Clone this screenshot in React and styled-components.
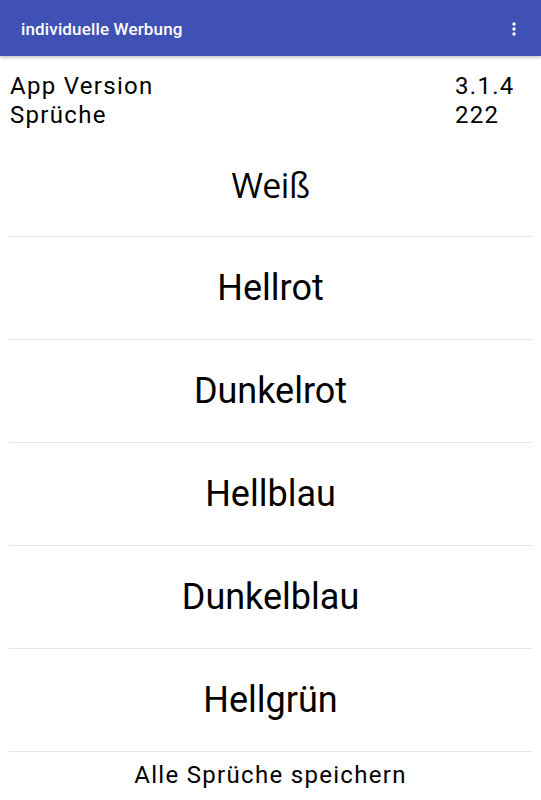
import styled, { createGlobalStyle } from "styled-components";

const colors = ["Weiß", "Hellrot", "Dunkelrot", "Hellblau", "Dunkelblau", "Hellgrün"];

const info = [
  { label: "App Version", value: "3.1.4" },
  { label: "Sprüche", value: "222" },
];

const App = () => {
  return (
    <>
      <GlobalStyle />
      <Screen>
        <AppBar>
          <Title>individuelle Werbung</Title>
          <MenuButton aria-label="Menü">
            <svg width="4" height="14" viewBox="0 0 4 14">
              <circle cx="2" cy="2" r="1.7" fill="#fff" />
              <circle cx="2" cy="7" r="1.7" fill="#fff" />
              <circle cx="2" cy="12" r="1.7" fill="#fff" />
            </svg>
          </MenuButton>
        </AppBar>

        {/* info */}
        <InfoBox>
          {info.map((item) => (
            <InfoRow key={item.label}>
              <InfoText>{item.label}</InfoText>
              <InfoText>{item.value}</InfoText>
            </InfoRow>
          ))}
        </InfoBox>

        {/* color list */}
        <ColorList>
          {colors.map((name) => (
            <ColorItem key={name}>
              <ColorText $alt={name === "Weiß"}>{name}</ColorText>
            </ColorItem>
          ))}
        </ColorList>

        <SaveButton>Alle Sprüche speichern</SaveButton>
      </Screen>
    </>
  );
};

const GlobalStyle = createGlobalStyle`
  html, body {
    margin: 0;
    padding: 0;
    background: #ffffff;
  }
  body {
    font-family: Roboto, "Liberation Sans", sans-serif;
    color: #000;
  }
`;

// main container
const Screen = styled.div`
  width: 541px;
  height: 800px;
  overflow: hidden;
  display: flex;
  flex-direction: column;
  background: #fff;
`;

// app bar
const AppBar = styled.header`
  height: 56px;
  flex-shrink: 0;
  display: flex;
  align-items: center;
  justify-content: space-between;
  background-color: #3f51b5;
  box-shadow: 0 2px 3px rgba(0, 0, 0, 0.22);
  padding: 0 0 0 21px;
  position: relative;
  z-index: 1;
`;

const Title = styled.div`
  color: #fff;
  font-family: Roboto, "Liberation Sans", sans-serif;
  font-size: 17px;
  font-weight: 500;
  letter-spacing: 0.15px;
  margin-top: 1px;
`;

const MenuButton = styled.div`
  width: 56px;
  height: 56px;
  display: flex;
  align-items: center;
  justify-content: center;
  margin-right: -1px;
  margin-top: 1px;
`;

// info
const InfoBox = styled.div`
  padding: 16px 10px 4px 10px;
`;

const InfoRow = styled.div`
  display: grid;
  grid-template-columns: 445px 1fr;
`;

const InfoText = styled.span`
  font-size: 24px;
  line-height: 29px;
  letter-spacing: 1.3px;
`;

// list
const ColorList = styled.div`
  display: flex;
  flex-direction: column;
`;

const ColorItem = styled.div`
  height: 102px;
  display: flex;
  align-items: center;
  justify-content: center;
  margin: 0 9px;
  border-bottom: 1px solid #e6e6e6;
`;

const ColorText = styled.span`
  font-family: ${(props) => (props.$alt ? '"Open Sans", Roboto, sans-serif' : 'Roboto, "Liberation Sans", sans-serif')};
  font-size: ${(props) => (props.$alt ? "34px" : "36px")};
  letter-spacing: ${(props) => (props.$alt ? "-0.5px" : "0")};
  line-height: 42px;
`;

const SaveButton = styled.div`
  height: 48px;
  padding-top: 9px;
  box-sizing: border-box;
  text-align: center;
  font-size: 24px;
  line-height: 28px;
  letter-spacing: 1.3px;
`;

export default App;
